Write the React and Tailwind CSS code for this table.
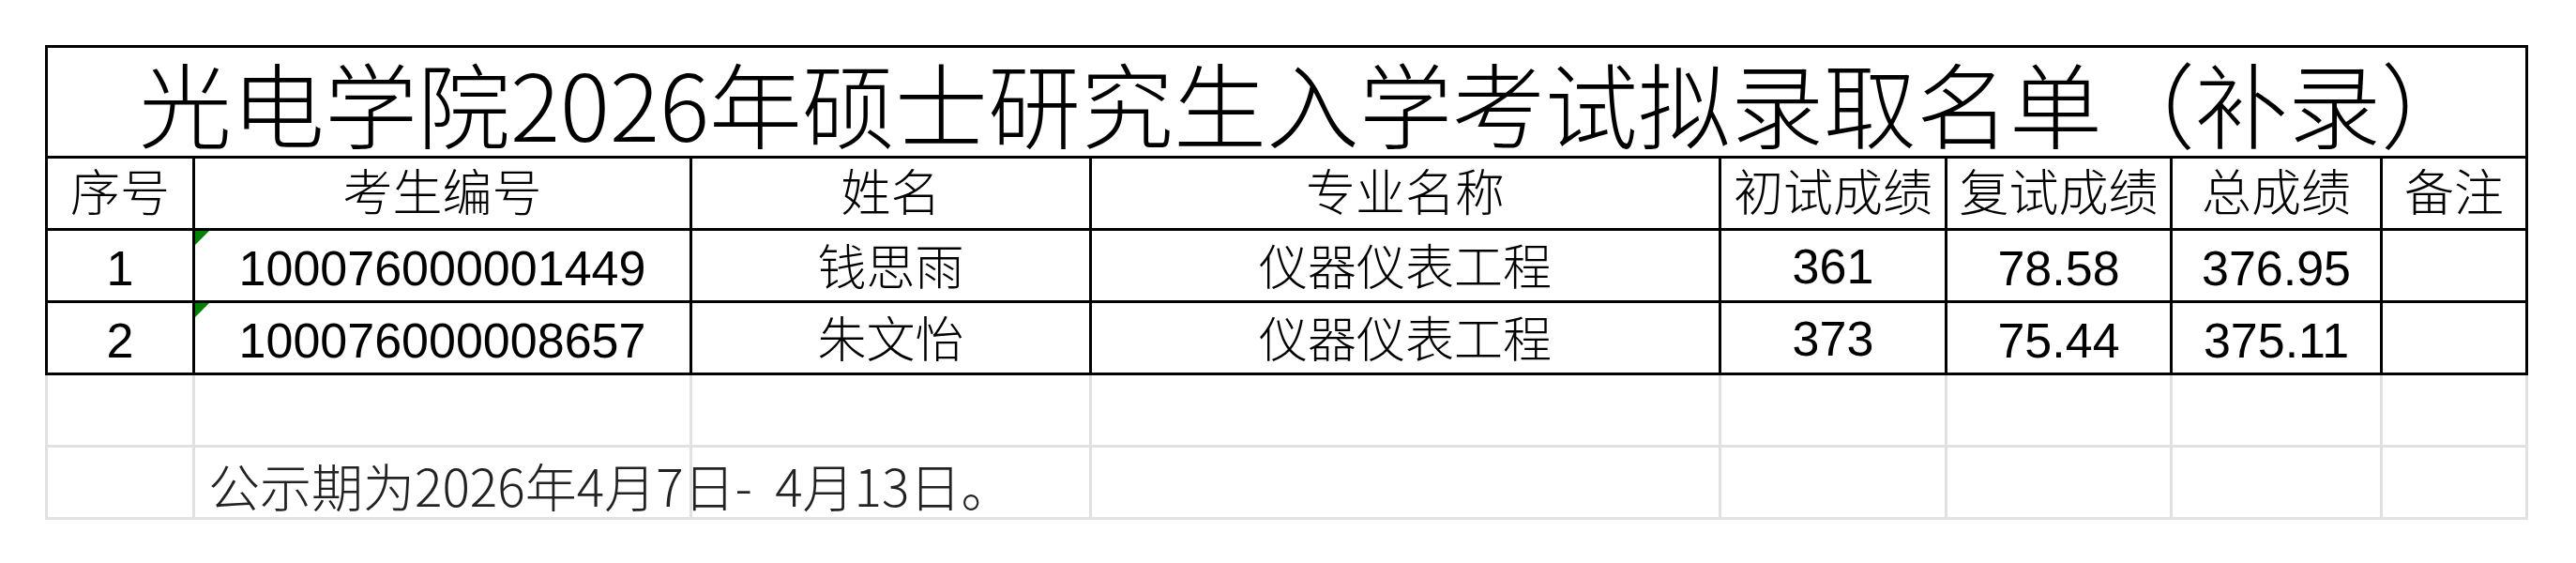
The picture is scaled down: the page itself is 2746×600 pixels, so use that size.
import React from "react";

const gridCols = "grid grid-cols-[157px_530px_426px_671px_241px_240px_224px_155px]";

const headers = ["序号", "考生编号", "姓名", "专业名称", "初试成绩", "复试成绩", "总成绩", "备注"];

const rows = [
  ["1", "100076000001449", "钱思雨", "仪器仪表工程", "361", "78.58", "376.95", ""],
  ["2", "100076000008657", "朱文怡", "仪器仪表工程", "373", "75.44", "375.11", ""],
];

function Cell({ children, className = "" }) {
  return (
    <div className={`relative flex items-center justify-center border-r-[3px] border-b-[3px] border-black leading-none ${className}`}>
      {children}
    </div>
  );
}

function GrayCell({ children, className = "" }) {
  return (
    <div className={`flex items-center border-r-[3px] border-b-[3px] border-[#e1e1e1] leading-none ${className}`}>
      {children}
    </div>
  );
}

export default function App() {
  return (
    <div className="w-[2746px] h-[600px] bg-white pl-[48px] pt-[48px] text-black font-['Liberation_Sans','Noto_Sans_CJK_SC',sans-serif]">
      {/* bordered part */}
      <div className={`${gridCols} w-fit border-l-[3px] border-t-[3px] border-black`}>
        <Cell className="col-span-8 h-[118px] text-[99px] font-light font-['Noto_Sans_CJK_SC',sans-serif] pl-[42px]">
          光电学院2026年硕士研究生入学考试拟录取名单（补录）
        </Cell>

        {headers.map((h) => (
          <Cell key={h} className="h-[77px] text-[53px] font-light">
            {h}
          </Cell>
        ))}

        {rows.map((r) =>
          r.map((v, i) => (
            <Cell key={r[0] + "-" + i} className={`h-[77px] text-[52px] font-light pt-[6px] ${i === 4 ? "pb-[4px]" : ""}`}>
              {i === 1 && (
                <span className="absolute left-0 top-0 w-0 h-0 border-t-[15px] border-t-[#008000] border-r-[15px] border-r-transparent" />
              )}
              {v}
            </Cell>
          ))
        )}
      </div>

      {/* plain grid rows below */}
      <div className={`${gridCols} w-fit border-l-[3px] border-[#e1e1e1]`}>
        {[0, 1, 2, 3, 4, 5, 6, 7].map((i) => (
          <GrayCell key={"e" + i} className="h-[77px]" />
        ))}
        <GrayCell className="h-[77px]" />
        <div className="col-span-3 h-[77px] flex items-center border-b-[3px] border-[#e1e1e1] relative">
          <div className="absolute inset-y-0 left-0 right-0 grid grid-cols-[530px_426px_671px]">
            <div className="border-r-[3px] border-[#e1e1e1]" />
            <div className="border-r-[3px] border-[#e1e1e1]" />
            <div className="border-r-[3px] border-[#e1e1e1]" />
          </div>
          <span className="relative z-10 pl-[14px] pt-[4px] whitespace-pre text-[55px] font-light text-[#222] font-['Noto_Sans_CJK_SC',sans-serif] leading-none">
            公示期为2026年4月7日-  4月13日。
          </span>
        </div>
        <GrayCell className="h-[77px]" />
        <GrayCell className="h-[77px]" />
        <GrayCell className="h-[77px]" />
        <GrayCell className="h-[77px]" />
      </div>
    </div>
  );
}
